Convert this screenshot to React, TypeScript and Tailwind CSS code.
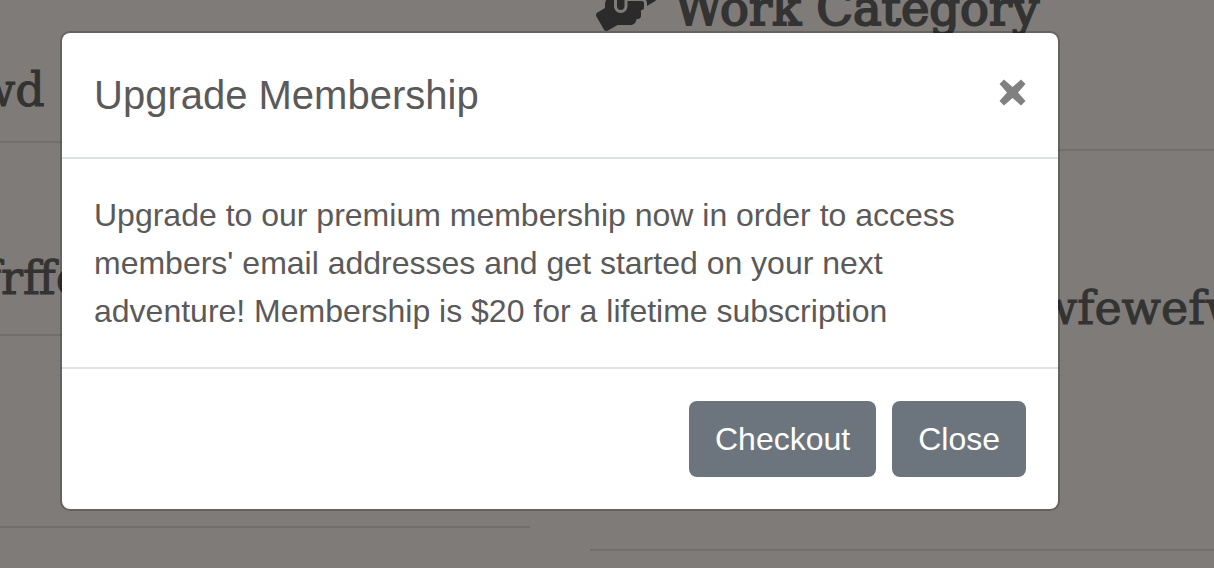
import { FaHandsHelping } from "react-icons/fa";

const sans = "font-['Liberation_Sans',Arial,sans-serif]";
const slab = "font-['DejaVu_Serif',serif]";

function ProfilePage() {
  return (
    <div
      aria-hidden="true"
      className={`${slab} absolute inset-0 grid grid-cols-[530px_1fr] gap-[60px] overflow-hidden bg-[#fff6f0] text-[46px] leading-[56px] text-[#666666] [-webkit-text-stroke:1px_#666666]`}
    >
      <div className="min-w-0 overflow-hidden whitespace-nowrap">
        <div className="h-[143px] border-b-2 border-black/10 pt-[62px]">
          <p className="-ml-[24px]">wd</p>
        </div>
        <div className="h-[193px] border-b-2 border-black/10 pt-[107px]">
          <p className="-ml-[16px]">frffe</p>
        </div>
        <div className="h-[192px] border-b-2 border-black/10" />
      </div>
      <div className="min-w-0 overflow-hidden whitespace-nowrap">
        <div className="flex h-[151px] items-start gap-[18px] border-b-2 border-black/10 pl-[6px]">
          <FaHandsHelping className="-mt-[17px] h-[48px] w-[60px] shrink-0 text-[#565656]" />
          <h2 className="-mt-[20px] text-[48px] [-webkit-text-stroke:2px_#666666]">
            Work Category
          </h2>
        </div>
        <div className="h-[400px] border-b-2 border-black/10 pt-[129px]">
          <p className="pl-[448px]">wfewefw</p>
        </div>
      </div>
    </div>
  );
}

const buttonClass =
  "h-[76px] rounded-lg bg-[#6c757d] px-[26px] text-[32px] leading-[48px] text-white";

export default function App() {
  return (
    <div className={`${sans} relative min-h-screen overflow-hidden`}>
      <ProfilePage />
      <div className="relative min-h-screen bg-black/50 pt-[31px] pl-[60px]">
        <div
          role="dialog"
          aria-modal="true"
          aria-labelledby="modal-title"
          className="w-full max-w-[1000px] rounded-[10px] border-2 border-black/20 bg-white bg-clip-padding text-[#5a5a5a]"
        >
          <header className="flex items-start justify-between border-b-2 border-[#dee2e6] p-8">
            <h1 id="modal-title" className="text-[40px] leading-[60px]">
              Upgrade Membership
            </h1>
            <button type="button" aria-label="Close dialog" className="pt-[14px] text-[#808080]">
              <svg viewBox="0 0 27 27" className="size-[27px]" fill="currentColor">
                <path d="M5 .5 13.5 8 22 .5 26.5 5 19 13.5 26.5 22 22 26.5 13.5 19 5 26.5 .5 22 8 13.5 .5 5Z" />
              </svg>
            </button>
          </header>
          <p className="p-8 text-[32px] leading-[48px]">
            Upgrade to our premium membership now in order to access members' email addresses and get
            started on your next adventure! Membership is $20 for a lifetime subscription
          </p>
          <footer className="flex justify-end gap-4 border-t-2 border-[#dee2e6] p-8">
            <button type="button" className={buttonClass}>
              Checkout
            </button>
            <button type="button" className={buttonClass}>
              Close
            </button>
          </footer>
        </div>
      </div>
    </div>
  );
}
